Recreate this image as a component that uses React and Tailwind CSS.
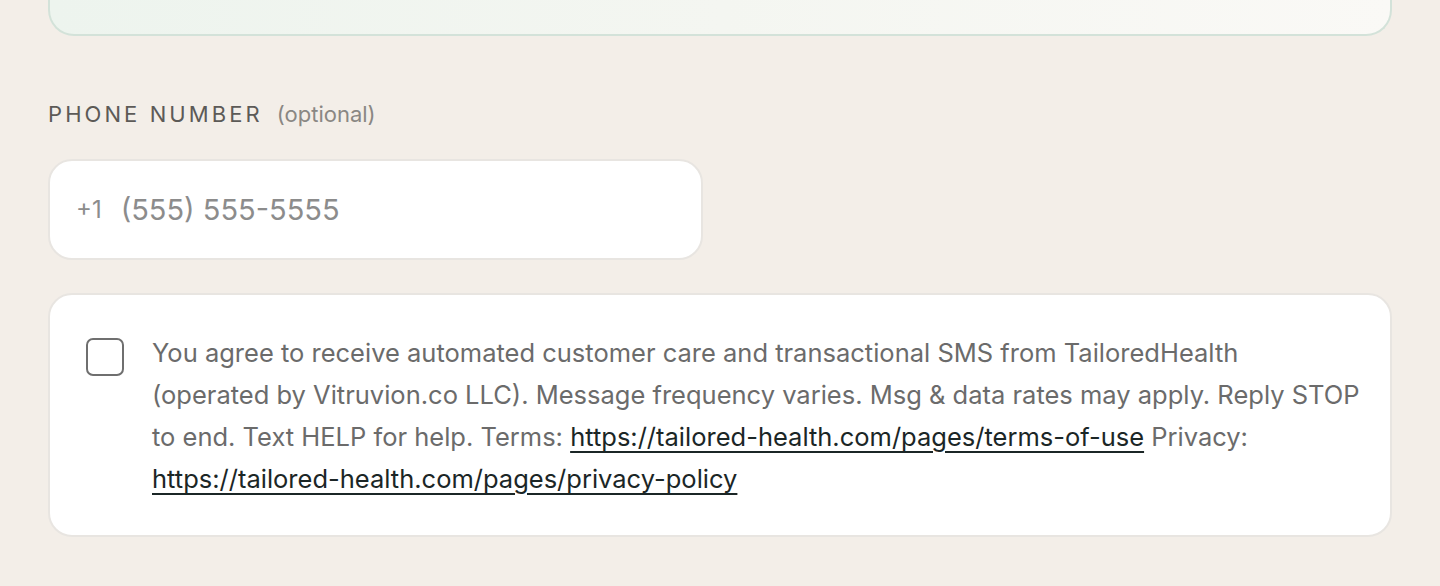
import React, { useState } from 'react';

const App = () => {
  const [checked, setChecked] = useState(false);

  return (
    <div className="min-h-screen bg-[#f3eee8] px-[48px] pb-[48px]" style={{ fontFamily: 'Inter, "Liberation Sans", sans-serif' }}>
      {/* bottom of the previous card */}
      <div className="h-[36px] rounded-b-[26px] border-x-2 border-b-2 border-[#d3e2d9] bg-gradient-to-r from-[#edf4ee] via-[#f4f6f1] to-[#faf9f6]"></div>

      {/* Phone label */}
      <div className="mt-[62px] flex items-baseline gap-[14px] text-[#5c5a57]">
        <span className="text-[22px] tracking-[0.14em] uppercase">Phone number</span>
        <span className="text-[22px] text-[#8a8783]">(optional)</span>
      </div>

      {/* Phone input */}
      <div className="mt-[28px] flex h-[101px] w-[655px] items-center rounded-[24px] border-2 border-[#e8e5e1] bg-white px-[26px]">
        <span className="text-[24px] text-[#8c8c8c]">+1</span>
        <input
          type="tel"
          placeholder="(555) 555-5555"
          className="ml-[19px] flex-1 bg-transparent text-[29px] text-[#333] outline-none placeholder:text-[#8c8c8c]"
        />
      </div>

      {/* SMS consent */}
      <div className="mt-[33px] flex gap-[28px] rounded-[24px] border-2 border-[#e8e5e1] bg-white pl-[36px] pr-[24px] pt-[37px] pb-[35px]">
        <button
          onClick={() => setChecked(!checked)}
          className={`mt-[6px] h-[38px] w-[38px] shrink-0 rounded-[7px] border-2 border-[#6f6f6f] ${checked ? 'bg-[#1e2a2a]' : 'bg-white'}`}
        ></button>
        <p className="text-[25.5px] leading-[42px] text-[#6b6b6b]">
          You agree to receive automated customer care and transactional SMS from TailoredHealth
          <br />
          (operated by Vitruvion.co LLC). Message frequency varies. Msg &amp; data rates may apply. Reply STOP to end. Text HELP for help. Terms:{' '}
          <a href="#" className="whitespace-nowrap text-[#1b2626] underline underline-offset-[5px]">https://tailored-health.com/pages/terms-of-use</a>{' '}
          Privacy:{' '}
          <a href="#" className="whitespace-nowrap text-[#1b2626] underline underline-offset-[5px]">https://tailored-health.com/pages/privacy-policy</a>
        </p>
      </div>
    </div>
  );
};

export default App;
